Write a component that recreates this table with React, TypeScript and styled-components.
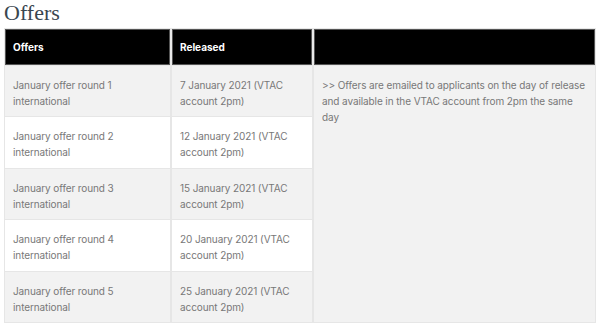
import React from "react";
import styled, { createGlobalStyle } from "styled-components";

const Global = createGlobalStyle`
  html, body { margin: 0; padding: 0; background: #fff; }
  body { font-family: Inter, "Noto Sans", sans-serif; }
`;

const Page = styled.div`
  padding: 0 4px;
`;

const Title = styled.h2`
  font-family: "Liberation Serif", "DejaVu Serif", serif;
  font-weight: 400;
  font-size: 22px;
  line-height: 26px;
  color: #3a4650;
  margin: 0 0 2px 0;
  padding-top: 0;
`;

const Table = styled.table`
  width: 592px;
  border-collapse: separate;
  border-spacing: 0;
  table-layout: fixed;
`;

const Th = styled.th`
  background: #000;
  color: #fff;
  font-weight: 700;
  font-size: 10px;
  text-align: left;
  height: 38px;
  box-sizing: border-box;
  padding: 0 8px;
  border: 1px solid #e8e8e8;
  box-shadow: inset 0 0 0 1px #555;
`;

const Td = styled.td<{ $alt?: boolean }>`
  background: ${(p) => (p.$alt ? "#fff" : "#f2f2f2")};
  color: #787878;
  font-size: 10px;
  letter-spacing: -0.1px;
  line-height: 16px;
  vertical-align: top;
  padding: 11px 8px 7px 8px;
  height: 51.4px;
  box-sizing: border-box;
  border: 1px solid #e6e6e6;
  border-top: none;
`;

const NoteCell = styled.td`
  background: #f2f2f2;
  color: #787878;
  font-size: 10px;
  letter-spacing: -0.1px;
  line-height: 16px;
  vertical-align: top;
  padding: 11px 8px;
  border: 1px solid #e6e6e6;
  border-top: none;
`;

const rows = [
  ["January offer round 1 international", "7 January 2021 (VTAC account 2pm)"],
  ["January offer round 2 international", "12 January 2021 (VTAC account 2pm)"],
  ["January offer round 3 international", "15 January 2021 (VTAC account 2pm)"],
  ["January offer round 4 international", "20 January 2021 (VTAC account 2pm)"],
  ["January offer round 5 international", "25 January 2021 (VTAC account 2pm)"],
];

export default function App() {
  return (
    <Page>
      <Global />
      <Title>Offers</Title>
      <Table>
        <colgroup>
          <col style={{ width: 167 }} />
          <col style={{ width: 142 }} />
          <col style={{ width: 283 }} />
        </colgroup>
        <thead>
          <tr>
            <Th>Offers</Th>
            <Th>Released</Th>
            <Th></Th>
          </tr>
        </thead>
        <tbody>
          {rows.map((r, i) => (
            <tr key={i}>
              <Td $alt={i % 2 === 1}>{r[0]}</Td>
              <Td $alt={i % 2 === 1}>{r[1]}</Td>
              {i === 0 && (
                <NoteCell rowSpan={5}>
                  &gt;&gt; Offers are emailed to applicants on the day of release and available in the VTAC account from 2pm the same day
                </NoteCell>
              )}
            </tr>
          ))}
        </tbody>
      </Table>
    </Page>
  );
}
